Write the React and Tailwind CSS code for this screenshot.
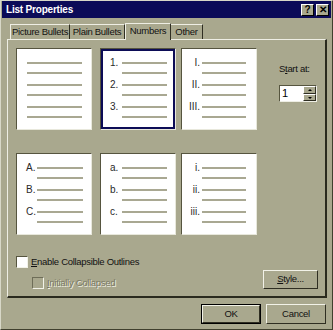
import React from "react";

const font = { fontFamily: '"Liberation Sans", Arial, sans-serif' };

function Line({ w }) {
  return <div className="h-[2px] bg-[#a9a892]" style={{ width: w }} />;
}

function Box({ labels, selected, align = "left", labelW = 10, lineW = 45 }) {
  const items = labels || [null, null, null];
  return (
    <div
      className={`w-[76px] h-[82px] bg-white border-t border-l border-t-[#56553f] border-l-[#56553f] border-r border-b border-r-[#e8e8dc] border-b-[#e8e8dc] ${
        selected ? "outline-2 outline-[#0c0c56] -outline-offset-3" : ""
      }`}
    >
      <div className="flex flex-col pt-[13px] gap-[10px]">
        {items.map((l, i) => (
          <div key={i} className="flex flex-col gap-[8px]">
            <div className="flex items-center h-[2px]">
              {l !== null ? (
                <>
                  <div
                    className={`text-[10px] leading-none shrink-0 ${
                      align === "right" ? "text-right" : "text-left pl-[9px]"
                    }`}
                    style={{ width: labelW, color: "#2a2a2a" }}
                  >
                    {l}
                  </div>
                  <div className="ml-[2px]"><Line w={lineW} /></div>
                </>
              ) : (
                <div className="ml-[10px]"><Line w={55} /></div>
              )}
            </div>
            <div className="flex">
              <div
                className="shrink-0"
                style={{ width: l !== null ? labelW + 2 : 10 }}
              />
              <Line w={l !== null ? lineW : 55} />
            </div>
          </div>
        ))}
      </div>
    </div>
  );
}

function Btn({ children, className = "", def }) {
  return (
    <div
      className={`flex items-center justify-center text-[9.5px] tracking-[-0.3px] text-[#111] bg-[#a9a88e] ${
        def ? "border border-black" : ""
      } ${className}`}
    >
      <div className="w-full h-full flex items-center justify-center border-t border-l border-t-[#f2f2e8] border-l-[#f2f2e8] border-r border-b border-r-[#2f2e22] border-b-[#2f2e22]">
        {children}
      </div>
    </div>
  );
}

export default function App() {
  return (
    <div
      className="antialiased w-[333px] h-[330px] bg-[#a9a88e] border border-[#d8d8c8] border-r-[#40402e] border-b-[#40402e] flex flex-col overflow-hidden"
      style={font}
    >
      {/* Title bar */}
      <div className="mx-[1px] h-[17px] bg-[#0b0b58] flex items-center justify-between pl-[4px] pr-[2px]">
        <span className="text-white font-bold text-[10px] tracking-[-0.2px]">
          List Properties
        </span>
        <div className="flex gap-[2px]">
          <div className="w-[13px] h-[12px] bg-[#a9a88e] border-t border-l border-t-white border-l-white border-r border-b border-r-black border-b-black flex items-center justify-center text-[10px] font-bold leading-none">
            ?
          </div>
          <div className="w-[13px] h-[12px] bg-[#a9a88e] border-t border-l border-t-white border-l-white border-r border-b border-r-black border-b-black flex items-center justify-center text-[10px] font-bold leading-none">
            ✕
          </div>
        </div>
      </div>

      {/* Tabs */}
      <div className="flex items-end mt-[4px] ml-[9px] h-[17px] text-[9.5px] tracking-[-0.3px] text-[#111]">
        <div className="w-[60px] h-[15px] flex items-center justify-center border-t border-l border-t-[#eeeee4] border-l-[#eeeee4] border-r border-r-[#2f2e22]">
          Picture Bullets
        </div>
        <div className="w-[55px] h-[15px] flex items-center justify-center border-t border-t-[#eeeee4] border-r border-r-[#2f2e22]">
          Plain Bullets
        </div>
        <div className="w-[46px] h-[17px] pb-[2px] flex items-center justify-center border-t border-l border-t-[#eeeee4] border-l-[#eeeee4] border-r border-r-[#2f2e22] -mb-[1px] relative z-10 bg-[#a9a88e]">
          Numbers
        </div>
        <div className="w-[32px] h-[15px] flex items-center justify-center border-t border-t-[#eeeee4] border-r border-r-[#2f2e22]">
          Other
        </div>
      </div>

      {/* Panel */}
      <div className="ml-[6px] mr-[5px] h-[259px] border-t border-l border-t-[#eeeee4] border-l-[#eeeee4] border-r-2 border-b-2 border-r-[#2a2a1e] border-b-[#2a2a1e] flex flex-col">
        <div className="flex pl-[8px] pt-[8px]">
          <div className="flex flex-col gap-[23px]">
            <div className="flex">
              <Box />
              <div className="ml-[8px]">
                <Box labels={["1.", "2.", "3."]} selected labelW={19} lineW={45} />
              </div>
              <div className="ml-[5px]">
                <Box labels={["I.", "II.", "III."]} align="right" labelW={18} lineW={44} />
              </div>
            </div>
            <div className="flex">
              <Box labels={["A.", "B.", "C."]} labelW={18} lineW={46} />
              <div className="ml-[8px]">
                <Box labels={["a.", "b.", "c."]} labelW={19} lineW={45} />
              </div>
              <div className="ml-[5px]">
                <Box labels={["i.", "ii.", "iii."]} align="right" labelW={18} lineW={44} />
              </div>
            </div>
          </div>
          <div className="ml-[22px] flex flex-col pt-[14px]">
            <div className="text-[9.5px] tracking-[-0.3px] text-[#111]">
              S<span className="underline">t</span>art at:
            </div>
            <div className="mt-[9px] w-[38px] h-[17px] bg-white border-t border-l border-t-[#56553f] border-l-[#56553f] border-r border-b border-r-[#eeeee4] border-b-[#eeeee4] flex items-center justify-between">
              <span className="text-[11px] pl-[2px] leading-none">1</span>
              <div className="flex flex-col w-[13px] h-[15px]">
                <div className="flex-1 bg-[#a9a88e] border-t border-l border-t-white border-l-white border-r border-b border-r-[#2f2e22] border-b-[#2f2e22] flex items-center justify-center">
                  <div className="w-0 h-0 border-l-[2px] border-r-[2px] border-b-[2px] border-l-transparent border-r-transparent border-b-black" />
                </div>
                <div className="flex-1 bg-[#a9a88e] border-t border-l border-t-white border-l-white border-r border-b border-r-[#2f2e22] border-b-[#2f2e22] flex items-center justify-center">
                  <div className="w-0 h-0 border-l-[2px] border-r-[2px] border-t-[2px] border-l-transparent border-r-transparent border-t-black" />
                </div>
              </div>
            </div>
          </div>
        </div>

        {/* Checkboxes */}
        <div className="flex mt-[20px] pl-[8px]">
          <div className="flex flex-col">
            <div className="flex items-center gap-[3px]">
              <div className="w-[12px] h-[12px] bg-white border-t border-l border-t-[#56553f] border-l-[#56553f] border-r border-b border-r-[#f2f2e8] border-b-[#f2f2e8]" />
              <span className="text-[9.5px] tracking-[-0.3px] text-[#111]">
                <span className="underline">E</span>nable Collapsible Outlines
              </span>
            </div>
            <div className="flex items-center gap-[3px] ml-[16px] mt-[7px]">
              <div className="w-[12px] h-[12px] bg-[#a9a88e] border-t border-l border-t-[#6e6d58] border-l-[#6e6d58] border-r border-b border-r-[#f2f2e8] border-b-[#f2f2e8]" />
              <span className="text-[9.5px] tracking-[-0.3px] text-[#7a7964] [text-shadow:1px_1px_0_#f0f0e4]">
                <span className="underline">I</span>nitially Collapsed
              </span>
            </div>
          </div>
          <div className="ml-auto mr-[7px] mt-[15px]">
            <Btn className="w-[55px] h-[19px]">
              <span>
                <span className="underline">S</span>tyle...
              </span>
            </Btn>
          </div>
        </div>
      </div>

      {/* Bottom buttons */}
      <div className="flex justify-end gap-[5px] mr-[6px] mt-[6px]">
        <Btn def className="w-[60px] h-[20px]">OK</Btn>
        <Btn className="w-[60px] h-[20px]">Cancel</Btn>
      </div>
    </div>
  );
}
